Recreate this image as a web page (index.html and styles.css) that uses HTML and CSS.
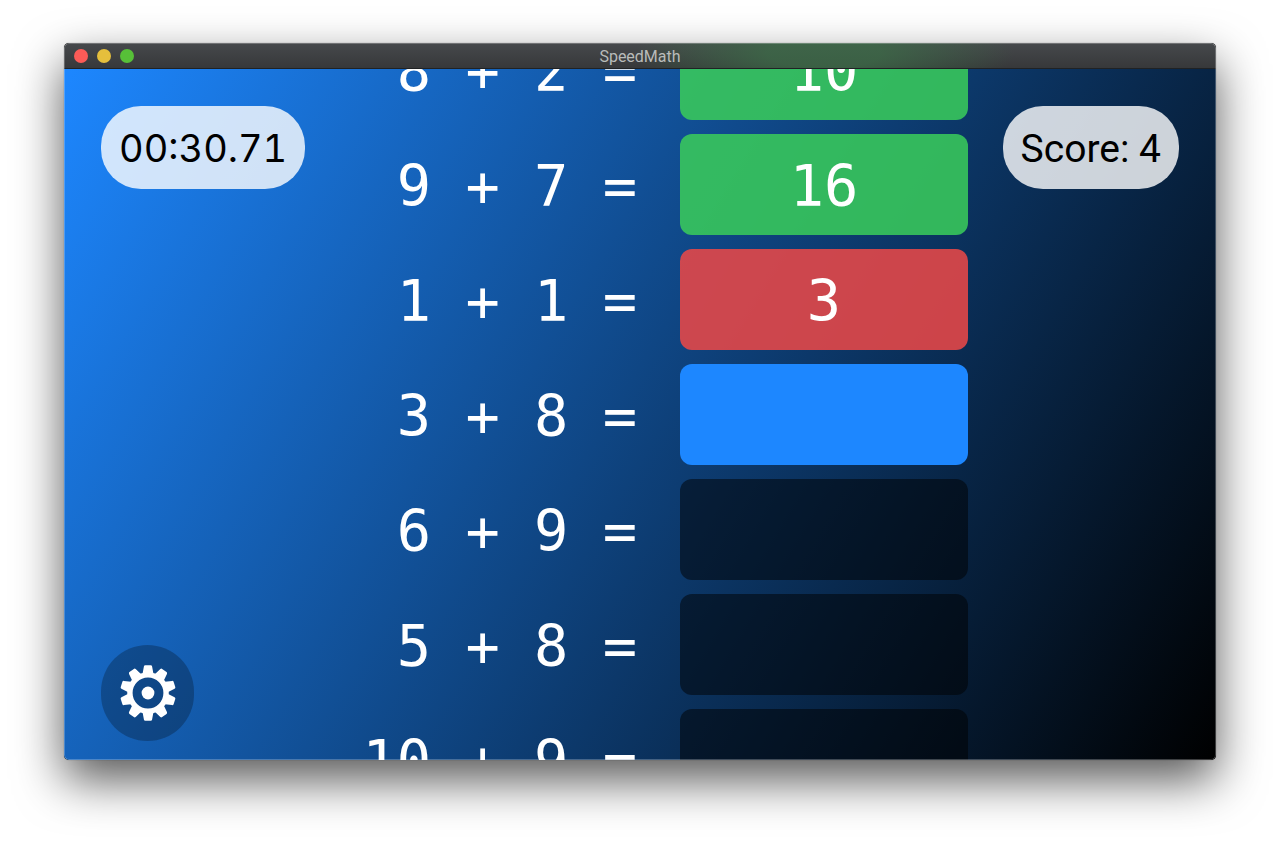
FILE: index.html
```html
<!DOCTYPE html>
<html lang="en">
<head>
<meta charset="utf-8">
<title>SpeedMath</title>
<link rel="stylesheet" href="styles.css">
</head>
<body>
<main class="window">
  <header class="titlebar">
    <div class="lights">
      <button class="light light-close" aria-label="Close"></button>
      <button class="light light-minimize" aria-label="Minimize"></button>
      <button class="light light-zoom" aria-label="Zoom"></button>
    </div>
    <h1 class="title">SpeedMath</h1>
  </header>
  <div class="game">
    <div class="side">
      <div class="pill timer" role="timer">00:30.71</div>
      <button class="settings" aria-label="Settings">
        <svg class="gear" viewBox="-28 -28 56 56" aria-hidden="true">
          <defs><path id="tooth" d="M-5.4-19.5L-4.1-26.6Q-3.9-27.8-2.7-27.8H2.7Q3.9-27.8 4.1-26.6L5.4-19.5Z"/></defs>
          <circle r="18.1" fill="none" stroke="currentColor" stroke-width="5.4"/>
          <circle r="6.4" fill="currentColor"/>
          <g fill="currentColor">
            <use href="#tooth"/>
            <use href="#tooth" transform="rotate(36)"/>
            <use href="#tooth" transform="rotate(72)"/>
            <use href="#tooth" transform="rotate(108)"/>
            <use href="#tooth" transform="rotate(144)"/>
            <use href="#tooth" transform="rotate(180)"/>
            <use href="#tooth" transform="rotate(216)"/>
            <use href="#tooth" transform="rotate(252)"/>
            <use href="#tooth" transform="rotate(288)"/>
            <use href="#tooth" transform="rotate(324)"/>
          </g>
        </svg>
      </button>
    </div>
    <form class="board">
      <div class="row"><label class="problem" for="a1">8 + 2 =</label><input class="answer right" id="a1" value="10" readonly></div>
      <div class="row"><label class="problem" for="a2">9 + 7 =</label><input class="answer right" id="a2" value="16" readonly></div>
      <div class="row"><label class="problem" for="a3">1 + 1 =</label><input class="answer wrong" id="a3" value="3" readonly></div>
      <div class="row"><label class="problem" for="a4">3 + 8 =</label><input class="answer current" id="a4"></div>
      <div class="row"><label class="problem" for="a5">6 + 9 =</label><input class="answer" id="a5" readonly></div>
      <div class="row"><label class="problem" for="a6">5 + 8 =</label><input class="answer" id="a6" readonly></div>
      <div class="row"><label class="problem" for="a7">10 + 9 =</label><input class="answer" id="a7" readonly></div>
    </form>
    <div class="side side-end">
      <div class="pill">Score: 4</div>
    </div>
  </div>
</main>
</body>
</html>
```
FILE: styles.css
```css
* {
  box-sizing: border-box;
}

body {
  margin: 0;
  height: 100vh;
  padding: 43px 64px 85px;
  display: flex;
  background: #fff;
  font-family: Roboto, "Liberation Sans", sans-serif;
}

button {
  border: 0;
  padding: 0;
}

.window {
  flex: 1;
  min-width: 0;
  display: flex;
  flex-direction: column;
  position: relative;
  border-radius: 5px;
  overflow: hidden;
  background: #000;
  box-shadow: 0 0 1px rgba(0, 0, 0, 0.5), 0 20px 48px rgba(0, 0, 0, 0.66);
}

/* Thin light rim over the window content */
.window::after {
  content: "";
  position: absolute;
  inset: 0;
  border: 1px solid rgba(255, 255, 255, 0.24);
  border-radius: 5px;
  pointer-events: none;
}

.titlebar {
  display: grid;
  grid-template-columns: 1fr auto 1fr;
  align-items: center;
  height: 26px;
  padding: 0 10px;
  border-bottom: 1px solid #202224;
  background:
    radial-gradient(ellipse 190px 50px at 66% 40%, rgba(60, 112, 72, 0.7) 30%, transparent),
    linear-gradient(#46494c, #37383a);
}

.lights {
  display: flex;
  gap: 9px;
}

.light {
  width: 14px;
  height: 14px;
  border-radius: 50%;
}

.light-close {
  background: #fc5b57;
}

.light-minimize {
  background: #e5bf3c;
}

.light-zoom {
  background: #57c038;
}

.title {
  margin: 0;
  padding-top: 3px;
  font-size: 16px;
  line-height: 20px;
  font-weight: 400;
  color: #b9bbba;
}

.game {
  flex: 1;
  min-height: 0;
  display: grid;
  grid-template-columns: minmax(0, 1fr) 656px minmax(0, 1fr);
  grid-template-rows: 100%;
  background: linear-gradient(121deg, #1d87ff, #000);
}

.side {
  display: flex;
  flex-direction: column;
  justify-content: space-between;
  align-items: flex-start;
  padding: 37px 37px 19px;
}

.side-end {
  align-items: flex-end;
}

.pill {
  padding: 20px 18px 16px;
  border-radius: 40px;
  background: rgba(255, 255, 255, 0.8);
  color: #000;
  font-size: 39px;
  line-height: 47px;
  white-space: nowrap;
}

.timer {
  padding: 19px 18px 17px;
  font-family: Inter, sans-serif;
  font-size: 38px;
  font-variant-numeric: tabular-nums;
}

.settings {
  display: grid;
  place-items: center;
  width: 93px;
  height: 96px;
  border-radius: 48px;
  background: rgba(0, 0, 0, 0.25);
  color: #fff;
}

.gear {
  width: 56px;
  height: 56px;
}

.board {
  display: flex;
  flex-direction: column;
  justify-content: center;
  gap: 14px;
  overflow: hidden;
  color: #fff;
  font-family: "DejaVu Sans Mono", monospace;
  font-size: 57px;
}

.row {
  flex: none;
  display: flex;
  align-items: center;
  gap: 43px;
}

.problem {
  flex: 1;
  padding-top: 3px;
  text-align: right;
  white-space: pre;
}

.answer {
  width: 288px;
  height: 101px;
  padding: 3px 0 0;
  border: 0;
  border-radius: 12px;
  outline: 0;
  background: rgba(0, 0, 0, 0.5);
  color: inherit;
  font: inherit;
  text-align: center;
}

.right {
  background: rgba(57, 202, 91, 0.88);
}

.wrong {
  background: rgba(232, 72, 72, 0.88);
}

.current {
  background: #1d87ff;
}
```
